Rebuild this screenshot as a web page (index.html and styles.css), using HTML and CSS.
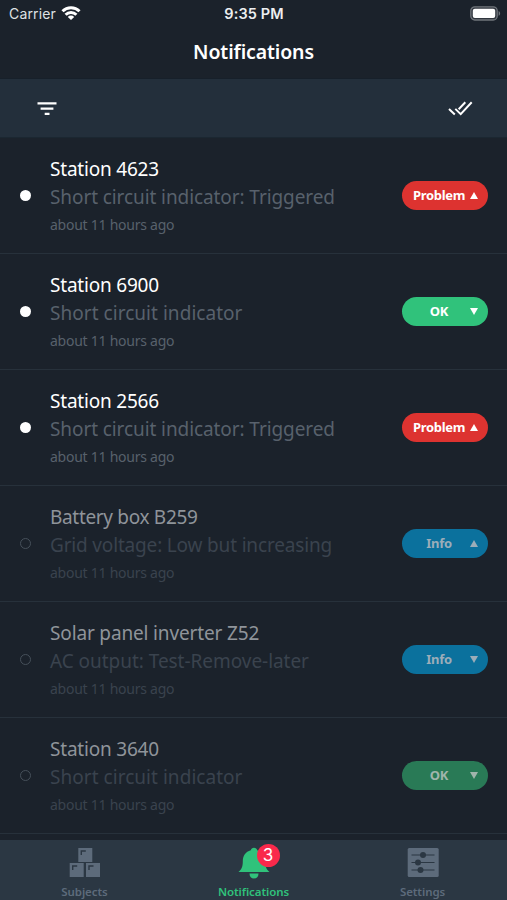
FILE: index.html
```html
<!DOCTYPE html>
<html lang="en">
<head>
<meta charset="utf-8">
<meta name="viewport" content="width=device-width, initial-scale=1">
<title>Notifications</title>
<link rel="stylesheet" href="styles.css">
</head>
<body>
<div class="app">
  <header class="top">
    <div class="status">
      <div class="carrier"><span>Carrier</span>
        <svg width="20" height="15" viewBox="0 0 20 15" fill="none" stroke="#fff" stroke-width="3"><path d="M1.500 6.200A12 12 0 0 1 18.500 6.200"/><path d="M4.600 9.800A7.600 7.600 0 0 1 15.400 9.800"/><path d="M10 15L6.800 11.900A4.500 4.500 0 0 1 13.200 11.900Z" fill="#fff" stroke="none"/></svg>
      </div>
      <div class="clock">9:35 PM</div>
      <div class="power">
        <svg width="31" height="15" viewBox="0 0 31 15"><rect x=".8" y=".8" width="26.4" height="13.2" rx="4" fill="#30363e" stroke="#70757b" stroke-width="1.3"/><rect x="2.8" y="2.8" width="22.4" height="9.2" rx="2" fill="#fff"/><path d="M28.6 5C30.6 5.8 30.6 9 28.6 9.8Z" fill="#70757b"/></svg>
      </div>
    </div>
    <h1 class="heading">Notifications</h1>
  </header>
  <div class="toolbar">
    <svg width="20" height="14" viewBox="0 0 20 14" fill="#fff"><path d="M.5.3h19v2.2H.5zM3.6 5.6h12.8v2.2H3.6zM7.7 10.8h4.8V13H7.7z"/></svg>
    <svg width="25" height="15" viewBox="0 0 25 15" fill="none" stroke="#fff" stroke-width="2"><path d="M1 7.9L6.8 13.4M7.3 7.9L12.7 13.1L23.7 1.3M10.7 8.2L17.3 1.3"/></svg>
  </div>
  <main class="list">
    <article class="row">
      <span class="dot"></span>
      <div class="info"><h2 class="title">Station 4623</h2><p class="detail long">Short circuit indicator: Triggered</p><p class="time">about 11 hours ago</p></div>
      <div class="badge problem"><span class="label">Problem</span><i class="arrow up"></i></div>
    </article>
    <article class="row">
      <span class="dot"></span>
      <div class="info"><h2 class="title">Station 6900</h2><p class="detail">Short circuit indicator</p><p class="time">about 11 hours ago</p></div>
      <div class="badge ok"><span class="label">OK</span><i class="arrow"></i></div>
    </article>
    <article class="row">
      <span class="dot"></span>
      <div class="info"><h2 class="title">Station 2566</h2><p class="detail long">Short circuit indicator: Triggered</p><p class="time">about 11 hours ago</p></div>
      <div class="badge problem"><span class="label">Problem</span><i class="arrow up"></i></div>
    </article>
    <article class="row read">
      <span class="dot"></span>
      <div class="info"><h2 class="title battery">Battery box B259</h2><p class="detail voltage">Grid voltage: Low but increasing</p><p class="time">about 11 hours ago</p></div>
      <div class="badge note"><span class="label">Info</span><i class="arrow up"></i></div>
    </article>
    <article class="row read">
      <span class="dot"></span>
      <div class="info"><h2 class="title solar">Solar panel inverter Z52</h2><p class="detail output">AC output: Test-Remove-later</p><p class="time">about 11 hours ago</p></div>
      <div class="badge note"><span class="label">Info</span><i class="arrow"></i></div>
    </article>
    <article class="row read">
      <span class="dot"></span>
      <div class="info"><h2 class="title">Station 3640</h2><p class="detail">Short circuit indicator</p><p class="time">about 11 hours ago</p></div>
      <div class="badge ok"><span class="label">OK</span><i class="arrow"></i></div>
    </article>
  </main>
  <nav class="tabs">
    <div class="tab">
      <div class="icon"><svg width="32" height="32" viewBox="0 0 32 32"><path fill="#5d6b7b" d="M9.3 1h14v14h-14zM.7 16h14v14H.7zM17 16h14v14H17z"/><path fill="none" stroke="#2b3743" stroke-width="1.4" d="M12.300 8V4h4.500M3.700 23v-4h4.500M20 23v-4h4.500"/></svg></div>
      <span class="name">Subjects</span>
    </div>
    <div class="tab active">
      <div class="icon"><svg width="32" height="32" viewBox="0 0 32 32" fill="#30c27b"><path d="M16 .7C17.700 .7 18.900 1.700 19.200 3.300C24.500 4.700 27.200 9 27.200 14.500C27.200 19.800 28.500 22.300 31.500 25H.5C3.500 22.300 4.800 19.800 4.800 14.500C4.800 9 7.500 4.700 12.800 3.300C13.100 1.700 14.300 .7 16 .7ZM11.500 26.500h9C20.500 29.700 18.700 31.500 16 31.500S11.500 29.700 11.500 26.500Z"/></svg><b class="count">3</b></div>
      <span class="name">Notifications</span>
    </div>
    <div class="tab">
      <div class="icon"><svg width="32" height="32" viewBox="0 0 32 32"><rect x=".7" y="1" width="31" height="29" rx="1.500" fill="#5d6b7b"/><g fill="#2b3743" stroke="#2b3743"><path d="M4.500 8h23M4.500 15.500h23M4.500 23h23" stroke-width="1.200"/><g stroke="none"><circle cx="16" cy="8" r="3"/><circle cx="11" cy="15.500" r="3"/><circle cx="13.500" cy="23" r="3"/></g></g></svg></div>
      <span class="name">Settings</span>
    </div>
  </nav>
</div>
</body>
</html>
```
FILE: styles.css
```css
* { box-sizing: border-box; }
body { margin: 0; background: #1b222b; color: #fff; font-family: "Noto Sans", sans-serif; }
h1, h2, p { margin: 0; }
svg { display: block; }
.app { height: 900px; display: flex; flex-direction: column; overflow: hidden; }
.top { height: 79px; border-bottom: 1px solid #17202a; flex: none; }
.status { height: 28px; padding: 0 6px 1px 9px; display: grid; grid-template-columns: 1fr auto 1fr; align-items: center; font-family: Inter, sans-serif; font-size: 14px; }
.carrier { display: flex; align-items: center; gap: 5px; color: #dfe1e4; letter-spacing: .15px; }
.carrier svg { margin-top: -2px; }
.clock { font-weight: 600; font-size: 14.500px; letter-spacing: .1px; padding-right: 2px; color: #eceef0; }
.power { display: flex; justify-content: flex-end; }
.heading { height: 47px; line-height: 47px; text-align: center; font-size: 19.500px; font-weight: 600; letter-spacing: -.12px; }
.toolbar { flex: none; height: 59px; padding: 1px 34px 0 37px; display: flex; align-items: center; justify-content: space-between; background: #232f3b; border-bottom: 1px solid #1b2731; }
.list { flex: none; height: 702px; }
.row { height: 116px; padding: 0 19px 0 20px; display: flex; align-items: center; border-bottom: 1px solid #27313b; }
.dot { flex: none; width: 11px; height: 11px; margin-right: 19px; border-radius: 50%; background: #fff; }
.info { flex: 1; white-space: nowrap; }
.title { font-size: 19px; line-height: 28px; font-weight: 400; letter-spacing: -.2px; }
.battery { letter-spacing: -.32px; }
.solar { letter-spacing: -.15px; }
.detail { font-size: 19px; line-height: 28px; color: #58616c; letter-spacing: .04px; }
.long { letter-spacing: -.09px; }
.voltage { letter-spacing: -.17px; }
.output { letter-spacing: -.04px; }
.time { font-size: 14px; line-height: 27px; margin-bottom: -1px; color: #58616c; letter-spacing: -.25px; }
.badge { flex: none; width: 86px; height: 29px; border-radius: 15px; padding: 0 10px 0 9px; display: flex; align-items: center; font-size: 13px; font-weight: 700; letter-spacing: -.3px; }
.label { flex: 1; text-align: center; padding: 0 3px 1px 0; }
.arrow { width: 8px; height: 7px; background: currentColor; clip-path: polygon(0 0, 100% 0, 50% 100%); }
.arrow.up { clip-path: polygon(50% 0, 100% 100%, 0 100%); }
.problem { background: #dd3330; }
.ok { background: #30c27b; }
.note { background: #0b719d; color: #9badb9; }
.read .title { color: #8f949a; }
.read .detail, .read .time { color: #3a434e; }
.read .dot { background: none; border: 1.500px solid #46505a; }
.read .ok { background: #297a56; color: #a0b5ac; }
.tabs { flex: none; height: 60px; display: grid; grid-template-columns: repeat(3, 1fr); background: #2b3743; }
.tab { display: flex; flex-direction: column; align-items: center; color: #5d6b7b; padding-top: 7px; }
.icon { position: relative; height: 36px; }
.name { font-size: 11.500px; line-height: 18px; font-weight: 600; letter-spacing: -.08px; }
.active { color: #30c27b; }
.count { position: absolute; left: 19px; top: -3px; width: 23px; height: 23px; border-radius: 50%; background: #f9294b; color: #fff; font: 400 17px/23px Inter, sans-serif; text-align: center; }
```
